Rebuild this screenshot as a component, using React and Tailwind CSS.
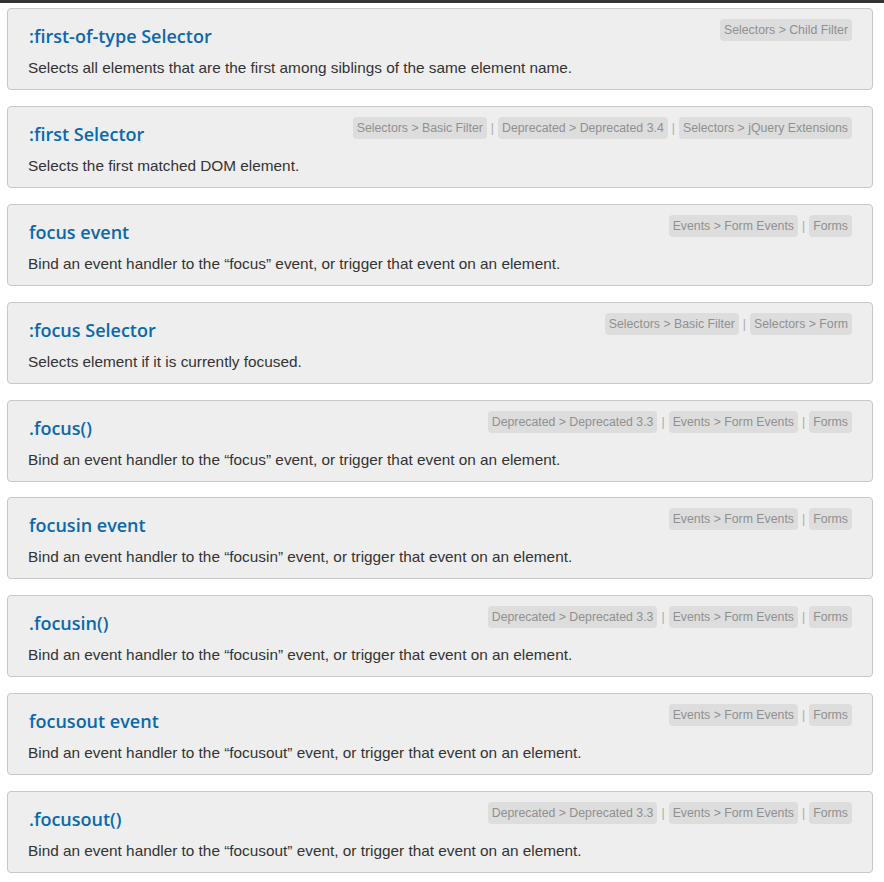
import React from 'react'

const entries = [
    {
        title: ':first-of-type Selector',
        desc: 'Selects all elements that are the first among siblings of the same element name.',
        tags: ['Selectors > Child Filter'],
    },
    {
        title: ':first Selector',
        desc: 'Selects the first matched DOM element.',
        tags: ['Selectors > Basic Filter', 'Deprecated > Deprecated 3.4', 'Selectors > jQuery Extensions'],
    },
    {
        title: 'focus event',
        desc: 'Bind an event handler to the \u201cfocus\u201d event, or trigger that event on an element.',
        tags: ['Events > Form Events', 'Forms'],
    },
    {
        title: ':focus Selector',
        desc: 'Selects element if it is currently focused.',
        tags: ['Selectors > Basic Filter', 'Selectors > Form'],
    },
    {
        title: '.focus()',
        desc: 'Bind an event handler to the \u201cfocus\u201d event, or trigger that event on an element.',
        tags: ['Deprecated > Deprecated 3.3', 'Events > Form Events', 'Forms'],
    },
    {
        title: 'focusin event',
        desc: 'Bind an event handler to the \u201cfocusin\u201d event, or trigger that event on an element.',
        tags: ['Events > Form Events', 'Forms'],
    },
    {
        title: '.focusin()',
        desc: 'Bind an event handler to the \u201cfocusin\u201d event, or trigger that event on an element.',
        tags: ['Deprecated > Deprecated 3.3', 'Events > Form Events', 'Forms'],
    },
    {
        title: 'focusout event',
        desc: 'Bind an event handler to the \u201cfocusout\u201d event, or trigger that event on an element.',
        tags: ['Events > Form Events', 'Forms'],
    },
    {
        title: '.focusout()',
        desc: 'Bind an event handler to the \u201cfocusout\u201d event, or trigger that event on an element.',
        tags: ['Deprecated > Deprecated 3.3', 'Events > Form Events', 'Forms'],
    },
]

const Tags = ({ tags }) => (
    <div className='mt-[1px] flex items-center text-[12.3px] leading-[22px] text-[#909090]' style={{ fontFamily: '"Liberation Sans", Arial, sans-serif' }}>
        {tags.map((t, i) => (
            <React.Fragment key={t}>
                {i > 0 && <span className='px-[4px] text-[#aaaaaa]'>|</span>}
                <span className='bg-[#dddddd] rounded-[4px] px-[4px] h-[22px]'>{t}</span>
            </React.Fragment>
        ))}
    </div>
)

const Entry = ({ entry }) => (
    <div className='h-[82px] bg-[#eeeeee] border border-[#c8c8c8] rounded-[4px] px-[20px] pt-[9px]'>
        <div className='flex justify-between items-start'>
            <h2 className='text-[18px] leading-[36px] font-semibold text-[#0a68ad] pl-px' style={{ fontFamily: '"Open Sans", "Noto Sans", sans-serif' }}>{entry.title}</h2>
            <Tags tags={entry.tags} />
        </div>
        <p className='mt-[4px] text-[15.35px] leading-[20px] text-[#333333]' style={{ fontFamily: '"Liberation Sans", Arial, sans-serif' }}>{entry.desc}</p>
    </div>
)

export default function App() {
    return (
        <div className='min-h-screen bg-white'>
            <div className='h-[3px] bg-[#333333]' />
            <div className='px-[7px] pt-[5px] flex flex-col gap-[15.875px] w-[880px]'>
                {entries.map((e) => <Entry key={e.title} entry={e} />)}
            </div>
        </div>
    )
}
